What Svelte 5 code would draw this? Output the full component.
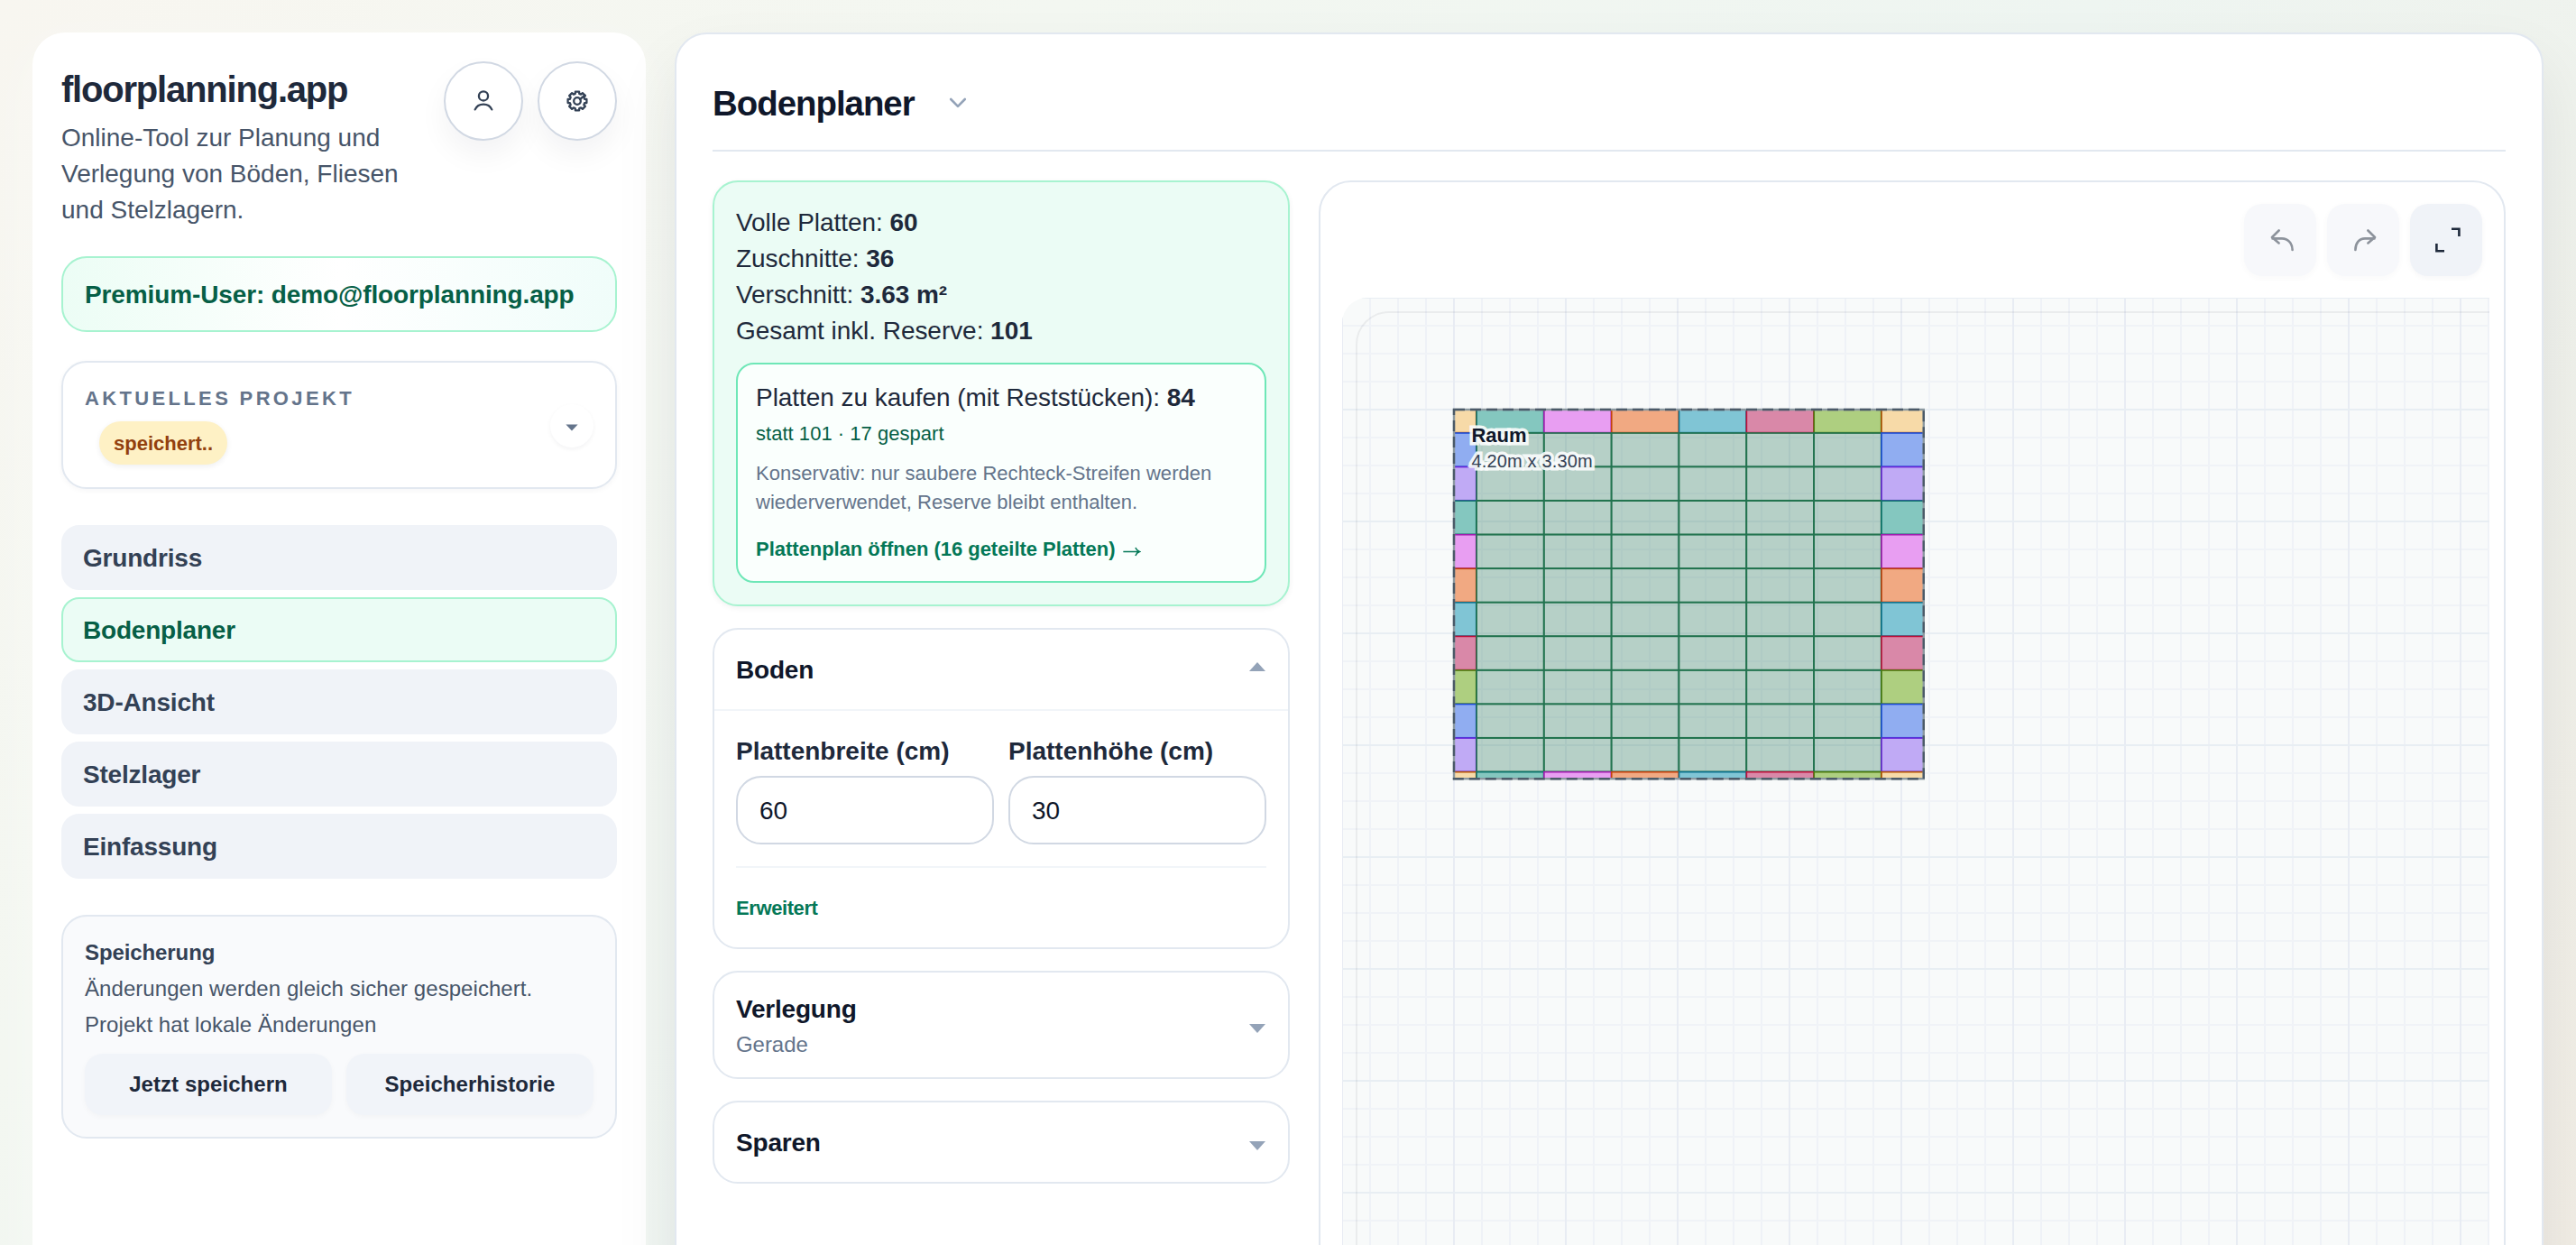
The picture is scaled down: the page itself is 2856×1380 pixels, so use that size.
<script>
  const nav = ['Grundriss', 'Bodenplaner', '3D-Ansicht', 'Stelzlager', 'Einfassung'];
  let active = $state('Bodenplaner');

  const stats = [
    ['Volle Platten:', '60'],
    ['Zuschnitte:', '36'],
    ['Verschnitt:', '3.63 m²'],
    ['Gesamt inkl. Reserve:', '101']
  ];

  // fill / stroke pairs for cut tiles
  const C = {
    amber: ['#f7daa8', '#b45309'],
    teal: ['#84c7bf', '#0f766e'],
    fuchsia: ['#e89ef2', '#a21caf'],
    orange: ['#f1a982', '#c2410c'],
    cyan: ['#80c5d5', '#0e7490'],
    rose: ['#d988a8', '#be123c'],
    lime: ['#aecf80', '#4d7c0f'],
    blue: ['#90adf1', '#1d4ed8'],
    violet: ['#c0aaf5', '#6d28d9'],
    full: ['rgba(31,111,84,0.3)', '#22734f']
  };
  const edgeRow = ['amber', 'teal', 'fuchsia', 'orange', 'cyan', 'rose', 'lime', 'amber'];
  const sideCol = ['', 'blue', 'violet', 'teal', 'fuchsia', 'orange', 'cyan', 'rose', 'lime', 'blue', 'violet', ''];

  // Room geometry inside the canvas: 124 px per metre
  const room = { x: 124, y: 124, w: 520.8, h: 409.2 };
  const px = 74.83, py = 37.57;
  const xs = [room.x, ...Array.from({ length: 7 }, (_, i) => 149.1 + i * px), room.x + room.w];
  const ys = [room.y, ...Array.from({ length: 11 }, (_, i) => 150 + i * py), room.y + room.h];

  const tiles = [];
  for (let r = 0; r < 12; r++) {
    for (let c = 0; c < 8; c++) {
      const kind = r === 0 || r === 11 ? edgeRow[c] : c === 0 || c === 7 ? sideCol[r] : 'full';
      tiles.push({
        x: xs[c], y: ys[r], w: xs[c + 1] - xs[c] - (c < 7 ? 0.4 : 0), h: ys[r + 1] - ys[r] - (r < 11 ? 0.4 : 0),
        fill: C[kind][0], stroke: C[kind][1]
      });
    }
  }

  const vLines = Array.from({ length: 42 }, (_, i) => i);
  const hLines = Array.from({ length: 35 }, (_, i) => i);

  const gear = (() => {
    const p = [];
    for (let i = 0; i < 8; i++) {
      const a = (i * Math.PI) / 4 - Math.PI / 2;
      for (const [d, r] of [[-0.27, 8.4], [-0.2, 10.6], [0.2, 10.6], [0.27, 8.4]]) {
        p.push(`${(12 + r * Math.cos(a + d)).toFixed(2)} ${(12 + r * Math.sin(a + d)).toFixed(2)}`);
      }
    }
    return 'M' + p.join('L') + 'Z';
  })();
</script>

<div class="page">
  <aside class="sidebar">
    <header class="brand">
      <div class="brand-text">
        <h1>floorplanning.app</h1>
        <p>Online-Tool zur Planung und Verlegung von Böden, Fliesen und Stelzlagern.</p>
      </div>
      <div class="actions">
        <button class="round" aria-label="Konto">
          <svg width="24" height="24" viewBox="0 0 24 24" fill="none" stroke="#334155" stroke-width="2.3" stroke-linecap="round">
            <circle cx="12" cy="6.4" r="5.1" />
            <path d="M2.7 21.4C4.4 17.6 7.8 15.6 12 15.6s7.6 2 9.3 5.8" />
          </svg>
        </button>
        <button class="round" aria-label="Einstellungen">
          <svg width="24" height="24" viewBox="0 0 24 24" fill="none" stroke="#334155" stroke-width="2.3" stroke-linejoin="round" stroke-linecap="round">
            <path d={gear} />
            <circle cx="12" cy="12" r="3.8" />
            <path d="M15 10L20.4 5.6" />
          </svg>
        </button>
      </div>
    </header>

    <div class="premium">Premium-User: demo@floorplanning.app</div>

    <section class="project">
      <div>
        <div class="project-label">AKTUELLES PROJEKT</div>
        <span class="badge">speichert..</span>
      </div>
      <div class="project-toggle">
        <svg width="14" height="8" viewBox="0 0 14 8"><path d="M0.4 0.4H13.6L7 7.6Z" fill="#64748b" /></svg>
      </div>
    </section>

    <nav>
      {#each nav as item}
        <button class="nav-item" class:active={item === active} onclick={() => (active = item)}>{item}</button>
      {/each}
    </nav>

    <section class="save">
      <div class="save-title">Speicherung</div>
      <div>Änderungen werden gleich sicher gespeichert.</div>
      <div>Projekt hat lokale Änderungen</div>
      <div class="save-buttons">
        <button>Jetzt speichern</button>
        <button>Speicherhistorie</button>
      </div>
    </section>
  </aside>

  <main>
    <header class="main-head">
      <h2>Bodenplaner</h2>
      <svg width="20" height="12" viewBox="0 0 20 12" fill="none" stroke="#94a3b8" stroke-width="2.6" stroke-linecap="round" stroke-linejoin="round"><path d="M2.2 2L10 9.8L17.8 2" /></svg>
    </header>

    <div class="columns">
      <div class="left">
        <section class="stats">
          {#each stats as [label, value]}
            <div class="stat">{label} <b>{value}</b></div>
          {/each}
          <div class="buy">
            <div class="stat">Platten zu kaufen (mit Reststücken): <b>84</b></div>
            <div class="saved">statt 101 · 17 gespart</div>
            <div class="hint">Konservativ: nur saubere Rechteck-Streifen werden wiederverwendet, Reserve bleibt enthalten.</div>
            <div class="plan">Plattenplan öffnen (16 geteilte Platten)
              <svg width="21" height="11" viewBox="0 0 22 12" fill="none" stroke="#047857" stroke-width="1.6"><path d="M1 6H20.4M15.8 1.2C16.6 3.4 18.4 5.2 20.8 6C18.4 6.8 16.6 8.6 15.8 10.8" /></svg>
            </div>
          </div>
        </section>

        <section class="card">
          <div class="card-head open">
            <span class="card-title">Boden</span>
            <svg class="up" width="18" height="10" viewBox="0 0 18 10"><path d="M0 10L9 0L18 10Z" fill="#94a3b8" /></svg>
          </div>
          <div class="card-body">
            <div class="fields">
              <label>Plattenbreite (cm)<input value="60" /></label>
              <label>Plattenhöhe (cm)<input value="30" /></label>
            </div>
            <div class="more">Erweitert</div>
          </div>
        </section>

        <section class="card">
          <div class="card-head tall">
            <div>
              <div class="card-title">Verlegung</div>
              <div class="sub">Gerade</div>
            </div>
            <svg class="down" width="18" height="10" viewBox="0 0 18 10"><path d="M0 0H18L9 10Z" fill="#94a3b8" /></svg>
          </div>
        </section>

        <section class="card">
          <div class="card-head">
            <span class="card-title">Sparen</span>
            <svg class="down" width="18" height="10" viewBox="0 0 18 10"><path d="M0 0H18L9 10Z" fill="#94a3b8" /></svg>
          </div>
        </section>
      </div>

      <section class="viewer">
        <div class="tools">
          <button class="tool off" aria-label="Rückgängig">
            <svg width="40" height="40" viewBox="0 0 40 40" fill="none" stroke="#1e293b" stroke-width="2.6" stroke-linecap="round" stroke-linejoin="round"><path d="M18.6 9.5L11 17L18.6 23.4M11.5 18.4H22C28.4 18.4 33.6 23.4 33.6 31" /></svg>
          </button>
          <button class="tool off" aria-label="Wiederholen">
            <svg width="40" height="40" viewBox="0 0 40 40" fill="none" stroke="#1e293b" stroke-width="2.6" stroke-linecap="round" stroke-linejoin="round"><path d="M25.4 9.5L33 17L25.4 23.4M32.5 18.4H22C15.6 18.4 11.4 23.4 11.4 31" /></svg>
          </button>
          <button class="tool" aria-label="Vollbild">
            <svg width="40" height="40" viewBox="0 0 40 40" fill="none" stroke="#1e293b" stroke-width="2.6"><path d="M26 7.8H34.4V16M9.4 24V32.2H18" /></svg>
          </button>
        </div>

        <svg class="canvas" width="1272" height="1050" viewBox="0 0 1272 1050">
          <rect width="1272" height="1050" fill="#f8fafa" />
          {#each vLines as i}
            {#if i % 4}<rect x={i * 31 - 1} y="0" width="2" height="1050" fill="#eff2f7" />{/if}
          {/each}
          {#each hLines as i}
            {#if i % 4}<rect x="0" y={i * 31 - 1} width="1272" height="2" fill="#f0f3f7" />{/if}
          {/each}
          {#each vLines as i}
            {#if i % 4 === 0}<rect x={i * 31 - 1} y="0" width="2" height="1050" fill="#e8ecf3" />{/if}
          {/each}
          {#each hLines as i}
            {#if i % 4 === 0}<rect x="0" y={i * 31 - 1} width="1272" height="2" fill="#e8eef3" />{/if}
          {/each}
          <path d="M16 1050V52A36 36 0 0 1 52 16H1272" fill="none" stroke="rgba(15,23,42,0.06)" stroke-width="2" />

          {#each tiles as t}
            <rect x={t.x} y={t.y} width={t.w} height={t.h} fill={t.fill} stroke={t.stroke} stroke-width="1.6" />
          {/each}

          <rect x={room.x} y={room.y} width={room.w} height={room.h} fill="none" stroke="#8b989f" stroke-width="2.4" />
          <rect x={room.x} y={room.y} width={room.w} height={room.h} fill="none" stroke="#4b5a68" stroke-width="2.4" stroke-dasharray="12 6" />

          <text class="room-name" x="143.5" y="160">Raum</text>
          <text class="room-size" x="143.5" y="188">4.20m x 3.30m</text>
        </svg>
      </section>
    </div>
  </main>
</div>

<style>
  :global(body) {
    margin: 0;
    overflow: hidden;
  }
  .page {
    box-sizing: border-box;
    display: flex;
    gap: 32px;
    height: 1380px;
    padding: 36px 36px 0;
    overflow: hidden;
    font-family: 'Liberation Sans', Arial, sans-serif;
    font-size: 28px;
    line-height: 40px;
    letter-spacing: -0.05px;
    color: #1e293b;
    background: linear-gradient(135deg, #f8f6f0 0%, #f3f7f1 28%, #eef5f1 55%, #f1ede5 100%);
  }
  .page * {
    box-sizing: border-box;
  }
  button {
    font: inherit;
    letter-spacing: inherit;
    border: 0;
    margin: 0;
    padding: 0;
  }
  svg {
    display: block;
    flex: none;
  }
  .sidebar {
    flex: none;
    width: 680px;
    height: 1400px;
    padding: 32px;
    border-radius: 36px;
    background: #fff;
    box-shadow: 0 16px 60px rgba(255, 255, 255, 0.4);
  }
  .brand {
    display: flex;
    justify-content: space-between;
    height: 184px;
  }
  .brand-text {
    width: 400px;
    padding-top: 7px;
  }
  h1 {
    margin: 0 0 10px;
    font-size: 40px;
    line-height: 48px;
    letter-spacing: -1.2px;
  }
  p {
    margin: 0;
    color: #475569;
    letter-spacing: 0;
  }
  .actions {
    display: flex;
    gap: 16px;
  }
  .round {
    display: flex;
    align-items: center;
    justify-content: center;
    width: 88px;
    height: 88px;
    border: 2px solid #d1d8e3;
    border-radius: 50%;
    background: #fff;
    box-shadow: 0 16px 32px rgba(15, 23, 42, 0.05);
  }
  .premium {
    display: flex;
    align-items: center;
    height: 84px;
    margin-top: 32px;
    padding: 2px 24px 0;
    border: 2px solid #a7f3d0;
    border-radius: 28px;
    background: linear-gradient(90deg, #ecfdf5, #fff 50%, #f0fdfa);
    color: #065f46;
    font-weight: 700;
    letter-spacing: -0.12px;
  }
  .project {
    display: flex;
    justify-content: space-between;
    align-items: center;
    height: 142px;
    margin-top: 32px;
    padding: 0 24px;
    border: 2px solid #e2e8f0;
    border-radius: 28px;
    background: #fff;
    box-shadow: 0 2px 6px rgba(15, 23, 42, 0.04);
  }
  .project-label {
    margin-bottom: 11px;
    padding-top: 1px;
    font-size: 22px;
    line-height: 28px;
    font-weight: 700;
    letter-spacing: 3.35px;
    color: #64748b;
  }
  .badge {
    display: block;
    width: 142px;
    height: 48px;
    margin-left: 16px;
    border-radius: 24px;
    background: #fef1c5;
    box-shadow: 0 2px 6px rgba(15, 23, 42, 0.07);
    color: #92400e;
    font-size: 22px;
    line-height: 50px;
    font-weight: 700;
    text-align: center;
    letter-spacing: 0;
  }
  .project-toggle {
    display: flex;
    align-items: center;
    justify-content: center;
    width: 48px;
    height: 48px;
    margin-top: 2px;
    padding-top: 3px;
    border-radius: 50%;
    background: #fff;
    box-shadow: 0 2px 5px rgba(15, 23, 42, 0.05);
  }
  nav {
    display: flex;
    flex-direction: column;
    gap: 8px;
    margin-top: 40px;
  }
  .nav-item {
    height: 72px;
    padding: 2px 22px 0;
    border: 2px solid #f0f3f8;
    border-radius: 20px;
    background: #f0f3f8;
    color: #334155;
    font-weight: 700;
    text-align: left;
    letter-spacing: -0.2px;
  }
  .nav-item.active {
    border-color: #a7f3d0;
    background: #ebfcf5;
    color: #065f46;
  }
  .save {
    height: 248px;
    margin-top: 40px;
    padding: 20px 24px;
    border: 2px solid #e2e8f0;
    border-radius: 28px;
    background: #f9fafc;
    color: #475569;
    font-size: 24px;
    letter-spacing: 0.06px;
  }
  .save-title {
    color: #334155;
    font-weight: 700;
    letter-spacing: -0.1px;
  }
  .save-buttons {
    display: grid;
    grid-template-columns: 1fr 1fr;
    gap: 16px;
    margin-top: 12px;
  }
  .save-buttons button {
    height: 68px;
    border-radius: 20px;
    background: #f1f4f9;
    box-shadow: 0 2px 6px rgba(15, 23, 42, 0.03);
    color: #1e293b;
    font-weight: 700;
  }
  main {
    flex: none;
    width: 2072px;
    height: 1420px;
    padding: 0 40px;
    border: 2px solid #e2e8f0;
    border-radius: 36px;
    background: #fff;
    box-shadow: 0 36px 72px rgba(15, 23, 42, 0.08);
  }
  .main-head {
    display: flex;
    align-items: center;
    gap: 38px;
    height: 130px;
    padding-top: 24px;
    border-bottom: 2px solid #e2e8f0;
  }
  h2 {
    margin: 0;
    padding-top: 2px;
    color: #0f172a;
    font-size: 38.4px;
    line-height: 48px;
    letter-spacing: -1px;
  }
  .columns {
    display: flex;
    gap: 32px;
    margin-top: 32px;
  }
  .left {
    display: flex;
    flex-direction: column;
    flex: none;
    gap: 24px;
    width: 640px;
  }
  .stats {
    padding: 25px 24px 24px;
    border: 2px solid #a7f3d0;
    border-radius: 28px;
    background: #ebfcf5;
    box-shadow: 0 2px 6px rgba(15, 23, 42, 0.06);
  }
  .buy {
    height: 244px;
    margin-top: 15px;
    padding: 17px 20px;
    border: 2px solid #6ee7b7;
    border-radius: 20px;
    background: #fafffd;
  }
  .saved,
  .hint,
  .plan {
    font-size: 22px;
    line-height: 32px;
    letter-spacing: 0.03px;
  }
  .saved {
    margin-top: 4px;
    color: #065f46;
  }
  .hint {
    margin-top: 12px;
    color: #64748b;
  }
  .plan {
    display: flex;
    align-items: center;
    gap: 7px;
    margin-top: 20px;
    color: #047857;
    font-weight: 700;
    letter-spacing: -0.03px;
  }
  .plan svg {
    margin-top: 4px;
  }
  .card {
    border: 2px solid #e2e8f0;
    border-radius: 28px;
    background: #fff;
  }
  .card-head {
    display: flex;
    align-items: center;
    justify-content: space-between;
    height: 88px;
    padding: 0 25px 0 24px;
  }
  .card-head.open {
    height: 90px;
    border-bottom: 2px solid #f1f5f9;
  }
  .card-head.tall {
    height: 116px;
  }
  .card-title {
    padding-top: 2px;
    color: #0f172a;
    font-weight: 700;
    letter-spacing: -0.2px;
  }
  .sub {
    color: #64748b;
    font-size: 24px;
    line-height: 37px;
  }
  .up {
    margin-bottom: 7px;
  }
  .down {
    margin-top: 8px;
  }
  .card-body {
    padding: 25px 24px 27px;
  }
  .fields {
    display: grid;
    grid-template-columns: 1fr 1fr;
    gap: 16px;
    padding-bottom: 24px;
    border-bottom: 2px solid #f1f5f9;
  }
  label {
    display: block;
    font-weight: 700;
    letter-spacing: 0;
  }
  input {
    display: block;
    width: 100%;
    height: 76px;
    margin-top: 7px;
    padding: 2px 24px 0;
    border: 2px solid #d1d8e3;
    border-radius: 28px;
    background: #fff;
    color: #0f172a;
    font: 28px 'Liberation Sans', Arial, sans-serif;
  }
  .more {
    margin-top: 29px;
    color: #047857;
    font-size: 22px;
    line-height: 32px;
    font-weight: 700;
    letter-spacing: -0.4px;
  }
  .viewer {
    flex: none;
    width: 1316px;
    height: 1240px;
    padding: 24px;
    border: 2px solid #e2e8f0;
    border-radius: 36px;
  }
  .tools {
    display: flex;
    justify-content: flex-end;
    gap: 12px;
    margin-bottom: 24px;
  }
  .tool {
    display: flex;
    align-items: center;
    justify-content: center;
    width: 80px;
    height: 80px;
    border-radius: 20px;
    background: #f0f3f8;
    box-shadow: 0 2px 6px rgba(15, 23, 42, 0.04);
  }
  .tool.off {
    opacity: 0.5;
  }
  .canvas {
    border-top-left-radius: 28px;
  }
  .room-name,
  .room-size {
    paint-order: stroke;
    stroke: rgba(250, 252, 252, 0.92);
    stroke-width: 7px;
    stroke-linejoin: miter;
  }
  .room-name {
    fill: #0f172a;
    font-size: 22px;
    font-weight: 700;
  }
  .room-size {
    fill: #334155;
    font-size: 20px;
    letter-spacing: 0.15px;
  }
</style>
